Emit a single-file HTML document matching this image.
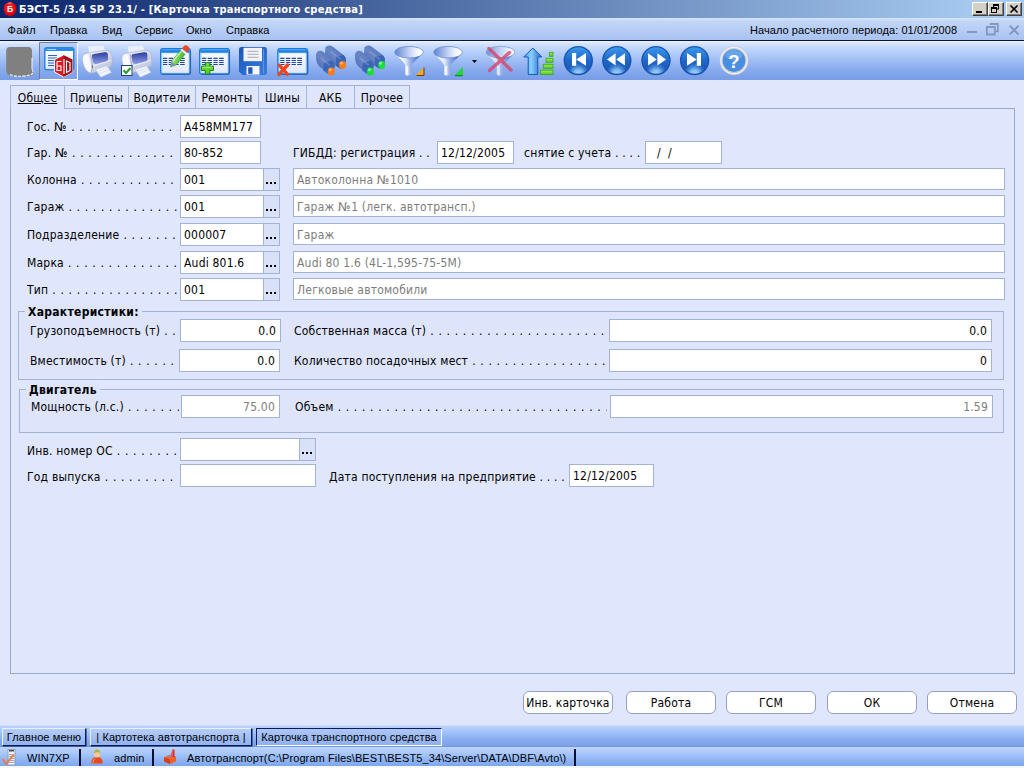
<!DOCTYPE html>
<html lang="ru">
<head>
<meta charset="utf-8">
<title>БЭСТ-5 - Карточка транспортного средства</title>
<style>
*{box-sizing:border-box;margin:0;padding:0}
html,body{width:1024px;height:768px;overflow:hidden;background:#e0e7fc}
body{position:relative;font-family:"DejaVu Sans Condensed","DejaVu Sans","Liberation Sans",sans-serif;font-size:12px;color:#000;letter-spacing:.2px}
.abs,.abs>*{position:absolute}
#title{position:absolute;left:0;top:0;width:1024px;height:18px;background:linear-gradient(90deg,#0a246a 0%,#0c266c 1%,#a6caf0 96%,#a6caf0 100%)}
#title .cap{position:absolute;left:19px;top:3px;font-weight:bold;font-size:11px;color:#fff;letter-spacing:.22px;white-space:nowrap;line-height:14px}
.wb svg{position:absolute;left:0;top:0}
.wb{position:absolute;top:2px;width:16px;height:14px;background:#d4d0c8;border:1px solid;border-color:#fff #404040 #404040 #fff;box-shadow:inset -1px -1px 0 #808080}
#menu{position:absolute;left:0;top:18px;width:1024px;height:22px;background:linear-gradient(180deg,#d6e6fb 0,#c3d6f7 3px,#a9c3f2 21px)}
#menu span{position:absolute;top:5px;font-size:11px;line-height:14px;font-family:"Liberation Sans",sans-serif;letter-spacing:.05px;white-space:nowrap}
#mline{position:absolute;left:0;top:40px;width:1024px;height:1px;background:#0a1438}
#tool{position:absolute;left:0;top:41px;width:1024px;height:39px;background:linear-gradient(180deg,#f0f5ff 0,#d6e4fd 2.5px,#bfd5fb 8px,#a6c3f7 17px,#8fb0f0 26px,#7fa3ea 34px,#779de6 39px)}

#pane{position:absolute;left:10px;top:108px;width:1005px;height:566px;border:1px solid #9ba8ca;background:#e0e7fc}
#tabs{position:absolute;left:10px;top:85px;height:24px}
.tab{position:absolute;top:0;height:24px;border:1px solid #a3b3d6;border-left:none;background:#dfe6fb;line-height:25px;white-space:nowrap;text-align:center}
.tab.first{border-left:1px solid #a3b3d6;border-bottom:none;background:#e0e7fc}
.tab.first span{text-decoration:underline}
.lbl{position:absolute;white-space:nowrap;overflow:hidden;line-height:16px;height:16px}
.inp{position:absolute;height:23px;border:1px solid #a3b3d6;background:#fff;line-height:23px;padding:0 3px;white-space:nowrap;overflow:hidden}
.inp.r{text-align:right;padding-right:4px}
.inp.g{color:#7d7d7d}
.inp.d{height:22px}
.dd{position:absolute;width:17px;height:23px;border:1px solid #a3b3d6;background:#d9e1f8}
.dd i{position:absolute;top:13px;width:2px;height:2px;background:#000}
.grp{position:absolute;border:1px solid #a3b3d6;background:#dee5fb}
.grp b{position:absolute;left:6px;top:-7px;padding:0 3px;background:#dee5fb;line-height:15px;height:15px;font-weight:bold;white-space:nowrap;letter-spacing:.3px}
.btn{position:absolute;top:691px;height:23px;width:90px;border:1px solid #93a0c2;border-radius:6px;background:#fff;text-align:center;line-height:23px;white-space:nowrap}

#wtabs{position:absolute;left:0;top:725px;width:1024px;height:22px;background:linear-gradient(180deg,#d4dffb 0,#bed2fc 1.5px,#aac8fc 5px,#96baf6 10px,#87abed 15px,#7fa3e7 20px,#7498dc 21.5px)}
.wt{position:absolute;top:3px;height:18px;font-family:"Liberation Sans",sans-serif;font-size:11px;letter-spacing:.1px;line-height:17px;white-space:nowrap;text-align:center;border:1px solid;border-color:#e6f0ff #0a1a5a #0a1a5a #e6f0ff;box-shadow:.5px .5px 0 #0a1a5a;background:linear-gradient(180deg,#b6cdf8,#92b2ee)}
.wt.on{border-color:#0a1a5a #fff #fff #0a1a5a;box-shadow:none;background:linear-gradient(180deg,#adc6f6,#8fb0ee)}
#status{position:absolute;left:0;top:747px;width:1024px;height:21px;background:linear-gradient(180deg,#b9d5fc 0,#b0c9fa 5px,#9ac1fa 9px,#93b2f1 13px,#82adf2 17px,#7ea5eb 19px);border-bottom:2px solid #f6f9ff;font-family:"Liberation Sans",sans-serif;font-size:11px;letter-spacing:.1px}
#status span{position:absolute;top:4px;line-height:15px;white-space:nowrap}
#status i{position:absolute;top:2px;width:1.5px;height:17px;background:#0a1030}
.lbl u{text-decoration:none;letter-spacing:.63px}
s{text-decoration:none;font-family:"DejaVu Sans",sans-serif;letter-spacing:.6px}
</style>
</head>
<body>
<div id="title"><svg width="16" height="16" viewBox="0 0 16 16" style="position:absolute;left:2px;top:1.200px"><defs><radialGradient id="gHex" cx=".45" cy=".4" r=".6"><stop offset="0" stop-color="#ff3030"/><stop offset=".7" stop-color="#e00818"/><stop offset="1" stop-color="#b00010"/></radialGradient></defs><path d="M8 .8l5.600 2.800L14.500 9l-2.200 4.800-4.300 1.600-4.300-1.600L1.500 9l.9-5.400z" fill="url(#gHex)"/><path d="M4.500 2.500l3.500-1.600 3 1.400-3 .9z" fill="#ff9a9a" opacity=".6"/><text x="8.100" y="10.800" text-anchor="middle" font-family="Liberation Sans, sans-serif" font-weight="bold" font-size="8.500" fill="#fff4e0">Б</text></svg><div class="cap">БЭСТ-5 /3.4 SP 23.1/ - [Карточка транспортного средства]</div>
<div class="wb" style="left:972px"><svg width="14" height="12" viewBox="0 0 14 12"><path d="M3 8h6v2H3z" fill="#000"/></svg></div>
<div class="wb" style="left:988px"><svg width="14" height="12" viewBox="0 0 14 12"><rect x="4.500" y="1.500" width="5" height="4.500" fill="none" stroke="#000"/><rect x="4" y="1" width="6" height="2" fill="#000"/><rect x="2.500" y="4.500" width="5" height="5" fill="#d4d0c8" stroke="#000"/><rect x="2" y="4" width="6" height="2" fill="#000"/></svg></div>
<div class="wb" style="left:1006px"><svg width="14" height="12" viewBox="0 0 14 12"><path d="M3.500 2.500l7 7M10.500 2.500l-7 7" stroke="#000" stroke-width="1.700"/></svg></div>
</div>
<div id="menu">
<span style="left:7.500px;letter-spacing:.35px">Файл</span><span style="left:50px">Правка</span><span style="left:102px">Вид</span><span style="left:135px">Сервис</span><span style="left:186px">Окно</span><span style="left:226px">Справка</span>
<svg width="60" height="22" viewBox="964 18 60 22" style="position:absolute;left:964px;top:0"><g stroke="#8598bd" fill="none"><path d="M967 32h10" stroke-width="2"/><path d="M989.800 24h8v7.300h-2.500M986.800 27h8v7.500h-8z" stroke-width="1.800"/><path d="M1009.700 25.800l8.800 8.700M1018.500 25.800l-8.800 8.700" stroke-width="2"/></g></svg><span style="left:750px;letter-spacing:.07px">Начало расчетного периода: 01/01/2008</span>
</div>
<div id="mline"></div>
<div id="tool"></div>
<svg id="tbsvg" width="1024" height="40" viewBox="0 41 1024 40" style="position:absolute;left:0;top:41px">
<defs>
<linearGradient id="gWin" x1="0" y1="0" x2="0" y2="1"><stop offset="0" stop-color="#ffffff"/><stop offset="1" stop-color="#dfe6fb"/></linearGradient>
<linearGradient id="gBall" x1="0" y1="0" x2="0" y2="1"><stop offset="0" stop-color="#3a98ec"/><stop offset=".5" stop-color="#1f66c8"/><stop offset="1" stop-color="#1a54b4"/></linearGradient>
<radialGradient id="gGlow" cx=".5" cy="1.020" r=".42"><stop offset="0" stop-color="#b4e2ff"/><stop offset=".45" stop-color="#8cc8fa" stop-opacity=".8"/><stop offset="1" stop-color="#5aa8f0" stop-opacity="0"/></radialGradient>
<linearGradient id="gFun" x1="0" y1="0" x2="1" y2="0"><stop offset="0" stop-color="#5f84d6"/><stop offset=".5" stop-color="#c4d3f4"/><stop offset=".85" stop-color="#ffffff"/></linearGradient>
<linearGradient id="gCone" gradientUnits="userSpaceOnUse" x1="4" y1="0" x2="23" y2="0"><stop offset="0" stop-color="#ffffff"/><stop offset=".35" stop-color="#e6edfc"/><stop offset=".6" stop-color="#9fb6ea"/><stop offset="1" stop-color="#4f78cc"/></linearGradient>
<linearGradient id="gArrow" x1="0" y1="0" x2="1" y2="0"><stop offset="0" stop-color="#3c98ea"/><stop offset=".4" stop-color="#8ad0fc"/><stop offset="1" stop-color="#1c68cc"/></linearGradient>
<linearGradient id="gBar" x1="0" y1="0" x2="0" y2="1"><stop offset="0" stop-color="#a6f050"/><stop offset="1" stop-color="#4cc818"/></linearGradient>
<linearGradient id="gPrTop" x1="0" y1="0" x2="0" y2="1"><stop offset="0" stop-color="#2c3a9c"/><stop offset="1" stop-color="#8f9fe6"/></linearGradient>
<linearGradient id="gPrBody" x1="0" y1="0" x2="1" y2="1"><stop offset="0" stop-color="#f6f7fb"/><stop offset="1" stop-color="#b4bcd6"/></linearGradient>
<linearGradient id="gBino" x1="0" y1="1" x2="1" y2="0"><stop offset="0" stop-color="#4565ac"/><stop offset=".5" stop-color="#6986c6"/><stop offset="1" stop-color="#4a6aae"/></linearGradient>
<linearGradient id="gFlop" x1="0" y1="0" x2="1" y2="1"><stop offset="0" stop-color="#1a56b8"/><stop offset="1" stop-color="#3a7ee0"/></linearGradient>
<linearGradient id="gPen" x1="0" y1="0" x2="1" y2="1"><stop offset="0" stop-color="#b8f090"/><stop offset="1" stop-color="#38b828"/></linearGradient>
<g id="win"><rect x=".75" y=".75" width="29.500" height="25.300" rx="2.200" fill="url(#gWin)" stroke="#1f78d6" stroke-width="1.500"/><rect x="2" y="5" width="27" height="20" fill="none" stroke="#9adcff" stroke-width="1" opacity=".8"/><path d="M1.200 3a2 2 0 0 1 2-2h24.600a2 2 0 0 1 2 2v1.700h-28.600z" fill="#1f7fe0"/><path d="M2.500 1.800h26" stroke="#58b4fa" stroke-width="1"/><path d="M30.300 4v20.500a1.800 1.800 0 0 1-1.800 1.800H2" stroke="#2a62b4" stroke-width="1.600" fill="none" opacity=".8"/></g>
<g id="rows" stroke="#24489c" stroke-width="1.100"><path d="M0 0h4.300M5.700 0h4.300M11.400 0h4.300M17.100 0h4.600M0 2.050h4.300M5.700 2.050h4.300M11.400 2.050h4.300M17.100 2.050h4.600M0 4.100h4.300M5.700 4.100h4.300M11.400 4.100h4.300M17.100 4.100h4.600M0 6.150h4.300M5.700 6.150h4.300M11.400 6.150h4.300M17.100 6.150h4.600"/></g>
<g id="printer">
<path d="M87.500 46l16.500-1 1.500 7.500-16 2z" fill="#eef2fc" stroke="#c9d2ea" stroke-width=".6" opacity=".9"/>
<path d="M82.300 59.500c-.3-3.500.7-5.600 3.700-6.200l18.500-3c4.500-.6 7.200 1.700 7.500 5.200l.3 6.500c.1 2.500-.8 4.200-3.300 5l-13.500 5.300c-3.500 1.300-6.700.8-8.700-1.300-2.300-2.300-4-6.500-4.500-11.500z" fill="url(#gPrBody)" stroke="#a9b2d0" stroke-width=".7"/>
<path d="M83 59c1-3 2.500-4.600 5-5l3.500 13-1 5.500c-4-1-6.800-6-7.500-13.500z" fill="#fbfcff" opacity=".9"/>
<path d="M90.700 54l1.800 12.500-1.200 6" stroke="#8e98bc" stroke-width=".9" fill="none" opacity=".75"/>
<path d="M92 57c-.3-1.700.4-2.700 2-3l10.500-1.700c2-.3 3.200.6 3.300 2.300l.2 4c.1 1.500-.6 2.400-2 2.800l-9 2.500c-2 .5-3.500-.2-4-2z" fill="url(#gPrTop)"/>
<path d="M91 66.500l20.500-6.200" stroke="#f4f6fd" stroke-width="1" opacity=".8" fill="none"/>
<path d="M95.500 69.500l11.500-3.700 4.300 6.700-10.500 4.700z" fill="#f2f5fd" stroke="#bcc6e2" stroke-width=".6"/>
<path d="M97.500 71.500l10.500-3.600M99 73.800l10.500-4" stroke="#d0d8ee" stroke-width=".7"/>
<ellipse cx="92.300" cy="66.500" rx=".7" ry="1.600" fill="#3c4468" opacity=".7"/>
</g>
<g id="bino">
<path d="M10 2.500c1.200-2.200 4.500-2.800 7-1l11 8.500c2.300 1.800 3 4 2.300 6.500l-1.300 4.500c-1 2.300-3.500 3-5.800 1.800l-9.700-6.800c-2.500-1.800-3.800-4.300-4-7.500z" fill="url(#gBino)"/>
<path d="M.6 9c.8-3 4-4.200 6.500-2.400l10.400 8c2.300 1.800 3 4.200 2.200 6.600l-1.400 5c-1 2.300-3.600 3-5.800 1.700l-7.500-5.500c-2.700-2-4.200-5-4.400-8.600z" fill="url(#gBino)"/>
<path d="M20.500 11.500l7.500-1.500c2 1.800 2.800 3.800 2.300 6.500l-1.300 4.500c-1 2.300-3.500 3-5.800 1.800l-3-2.200z" fill="#2f5cb4" opacity=".75"/>
<path d="M8.500 18l8-2.500c2.200 1.800 2.900 4 2.300 6.300l-1.400 5c-1 2.300-3.600 3-5.800 1.700l-4-3z" fill="#2f5cb4" opacity=".75"/>
<path d="M5 13l9 7M15 6.500l10 7.500" stroke="#9fb4e4" stroke-width="1.300" opacity=".45" fill="none"/>
</g>
<g id="funnel">
<path d="M.5 6.500C3 11 9 15 10.800 19.500v9c0 1.500 6.500 1.500 6.500 0v-9C19 15 26 11 28.700 6.500z" fill="url(#gCone)"/>
<path d="M11.200 20v8.500c0 1 2.300 1.200 2.600 0V20z" fill="#fff" opacity=".8"/>
<ellipse cx="14.600" cy="6.200" rx="14.300" ry="5.800" fill="url(#gFun)" stroke="#6a8ad0" stroke-width=".8"/>
</g>
<g id="ball">
<circle cx="0" cy="0" r="14.700" fill="#1a55b4"/>
<circle cx="0" cy="-.2" r="13.200" fill="url(#gBall)"/>
<circle cx="0" cy="-.2" r="13.200" fill="url(#gGlow)"/>
</g>
</defs>

<!-- 1: disabled blob -->
<path d="M10 47h18a4 4 0 0 1 4 4v18.500c0 2.500 1.500 3 1.500 4.500 0 2-6 2.500-12 2.500S7.500 76 7 73.500c-.8-1.500-.8-3-.8-5V51a4 4 0 0 1 3.800-4z" fill="#808080"/>
<path d="M10 74.600c3 1.600 8 2 13 1.500 5-.4 9-1 10.200-3.600" stroke="#fff" stroke-width="1.100" fill="none" stroke-dasharray="3 1.200" opacity=".95"/><path d="M32 58v10.500c0 1.500.8 2.500 1.300 3.500" stroke="#fff" stroke-width="1" fill="none" opacity=".9"/>

<!-- 2: pressed button -->
<rect x="39.500" y="42.500" width="38" height="37" fill="#86a8ec" opacity=".35"/>
<path d="M39.500 79.500v-37h38" stroke="#6f7f9c" stroke-width="1" fill="none"/>
<path d="M77.500 43v36.500h-38" stroke="#ffffff" stroke-width="1" fill="none"/>
<g transform="translate(44,47)">
<rect x=".75" y=".75" width="29" height="22" rx="2" fill="url(#gWin)" stroke="#2b86dc" stroke-width="1.500"/>
<path d="M1 3a2 2 0 0 1 2-2h24.500a2 2 0 0 1 2 2v1h-28.500z" fill="#2a8be6"/><path d="M3 2.500h9" stroke="#9fd4ff" stroke-width="1"/>
<path d="M4 8.500h9M4 11h9M4 13.500h9M4 16h9M4 18.500h9" stroke="#2a64c0" stroke-width="1.200"/>
</g>
<g transform="translate(54,55)">
<path d="M9.500 0l9 4.500v12.500l-9 5-9-5V4.500z" fill="#d81820" stroke="#fff" stroke-width="1"/>
<path d="M9.500 0l9 4.500v12.500l-9 5z" fill="#a01018"/>
<path d="M3 6.500h4.500M3 6.500v9h4v-4.500h-4M10 4v15M12.500 6l3.500 1.500v8l-3.500 2z" stroke="#fff" stroke-width="1.100" fill="none"/>
</g>

<!-- 3,4: printers -->
<use href="#printer"/>
<use href="#printer" x="39.500"/>
<rect x="121.500" y="65.500" width="10.500" height="10" fill="#fff" stroke="#1c4870" stroke-width="1"/>
<path d="M123.500 70.200l2.600 2.800 4.400-5" stroke="#2c9a2c" stroke-width="2" fill="none"/>

<!-- 5: window + pencil -->
<use href="#win" x="160" y="48"/>
<use href="#rows" x="163" y="58.400"/>
<g transform="translate(170.500,67) rotate(-50)">
<path d="M0 0l5-3h14.500v6h-14.500z" fill="url(#gPen)" stroke="#2c9a20" stroke-width=".5"/>
<path d="M0 0l5-3v6z" fill="#8a93a8"/>
<path d="M6 -1.800h13" stroke="#d4f8b4" stroke-width="1.200" opacity=".8"/>
<path d="M19.300-3.100h2.400v6.200h-2.400z" fill="#f4f0ec"/>
<path d="M21.500-3.200h2.500a3.200 3.200 0 0 1 0 6.400h-2.500z" fill="#e84a28"/>
</g>

<!-- 6: window + plus -->
<use href="#win" x="199" y="48"/>
<use href="#rows" x="202" y="58.400"/>
<path d="M205.300 62.800h4.500v3.400h3.700v4.300h-3.700v3.500h-4.500v-3.500h-3.900v-4.300h3.900z" fill="#5cd42c" stroke="#1f8410" stroke-width="1" stroke-linejoin="round"/>
<path d="M206.300 64h2.500M202.500 67.300h10" stroke="#b8f490" stroke-width="1" fill="none" opacity=".8"/>

<!-- 7: floppy -->
<path d="M241.500 47h23a2.500 2.500 0 0 1 2.500 2.500v23a2.500 2.500 0 0 1-2.500 2.500h-22l-3.500-3.500v-22a2.500 2.500 0 0 1 2.500-2.500z" fill="url(#gFlop)"/>
<rect x="243.500" y="47.800" width="18.500" height="13.400" fill="#f2f3f8"/>
<path d="M247.500 51.300h11M247.500 54.300h11M247.500 57.300h11" stroke="#b9b9c4" stroke-width="1.300"/>
<rect x="246.500" y="66" width="13" height="8.600" fill="#f4f6fc"/>
<rect x="248.200" y="67.300" width="4.300" height="6.500" fill="#2458b8"/>
<path d="M263.500 49v24" stroke="#6aa4f0" stroke-width="1" opacity=".7"/>

<!-- 8: window + red X -->
<use href="#win" x="277.200" y="48"/>
<use href="#rows" x="280.200" y="58.400"/>
<path d="M279.300 65.200l8 9M287.600 65l-8.600 9.400" stroke="#f0441c" stroke-width="3.400" stroke-linecap="round"/>

<!-- 9,10: binoculars -->
<use href="#bino" x="315.500" y="45"/>
<ellipse cx="331.200" cy="71.400" rx="3.500" ry="4" fill="#ff7a10"/><circle cx="330.300" cy="69.800" r="1.500" fill="#ffc090" opacity=".8"/>
<ellipse cx="342.500" cy="65" rx="3.500" ry="4.100" fill="#ff7a10"/><circle cx="341.400" cy="63.200" r="1.500" fill="#ffc090" opacity=".8"/>
<use href="#bino" x="354.500" y="45"/>
<ellipse cx="370.400" cy="71.400" rx="3.500" ry="4" fill="#18e038"/><circle cx="369.500" cy="69.800" r="1.500" fill="#a0ffb0" opacity=".8"/>
<ellipse cx="381.700" cy="65" rx="3.500" ry="4.100" fill="#18e038"/><circle cx="380.500" cy="63.200" r="1.500" fill="#a0ffb0" opacity=".8"/>

<!-- 11,12: funnels -->
<use href="#funnel" x="394.500" y="46"/>
<path d="M416.500 75.500v-1l7-7v8z" fill="#f8a818"/><path d="M416.500 75.500h7.500v-8" stroke="#6a3c10" stroke-width="1" fill="none"/>
<use href="#funnel" x="433.500" y="46"/>
<path d="M455 75.500v-.5l8-8v8.500z" fill="#20d830"/><path d="M455 75.700h8" stroke="#0c7a18" stroke-width="1" fill="none"/>
<path d="M472 60h5l-2.500 3z" fill="#000"/>

<!-- 13: funnel crossed -->
<use href="#funnel" x="486" y="46" opacity=".8"/>
<path d="M489 48.500l22 21.500M509.500 52.500l-20 18" stroke="#dc4468" stroke-width="3.400" stroke-linecap="round" opacity=".8"/>

<!-- 14: sort -->
<path d="M532.800 48l9 9h-4v17.500h-9.600V57h-4.400z" fill="url(#gArrow)" stroke="#1858b8" stroke-width="1"/>
<rect x="549.300" y="52.300" width="3.700" height="4" fill="url(#gBar)" stroke="#38a818" stroke-width=".8"/>
<rect x="546" y="58.300" width="7" height="4" fill="url(#gBar)" stroke="#38a818" stroke-width=".8"/>
<rect x="543.300" y="64.300" width="9.700" height="4" fill="url(#gBar)" stroke="#38a818" stroke-width=".8"/>
<rect x="540.500" y="70.200" width="12.500" height="4.300" fill="url(#gBar)" stroke="#38a818" stroke-width=".8"/>

<!-- 15-18: nav balls -->
<use href="#ball" x="578.300" y="60.600"/>
<path d="M572 53h4.200v12.800h-4.200zM576.300 59.400l9.700-6.400v12.800z" fill="#fff"/>
<use href="#ball" x="616.800" y="60.600"/>
<path d="M607 59.400l8.600-6.200v12.400zM616.300 59.400l8.600-6.200v12.400z" fill="#fff"/>
<use href="#ball" x="656" y="60.600"/>
<path d="M666 59.400l-8.600-6.200v12.400zM656.700 59.400l-8.600-6.200v12.400z" fill="#fff"/>
<use href="#ball" x="694.600" y="60.600"/>
<path d="M701 53h-4.200v12.800h4.200zM696.700 59.400l-9.700-6.400v12.800z" fill="#fff"/>

<!-- 19: help -->
<circle cx="734" cy="60.600" r="14.300" fill="#c9ccd2"/>
<circle cx="734" cy="60.600" r="13.200" fill="none" stroke="#eef0f4" stroke-width="1.200"/>
<circle cx="734" cy="60.600" r="11.300" fill="#4a8ee0"/>
<ellipse cx="734" cy="55" rx="8.500" ry="5" fill="#7fb8f4" opacity=".5"/>
<text x="734" y="67.500" text-anchor="middle" font-family="Liberation Sans, sans-serif" font-weight="bold" font-size="19" fill="#fff">?</text>
</svg>
<div id="pane"></div>
<div id="tabs"><div class="tab first" style="left:0px;width:55px"><span>Общее</span></div><div class="tab " style="left:55px;width:64px"><span>Прицепы</span></div><div class="tab " style="left:119px;width:67px"><span>Водители</span></div><div class="tab " style="left:186px;width:63px"><span>Ремонты</span></div><div class="tab " style="left:249px;width:48px"><span>Шины</span></div><div class="tab " style="left:297px;width:48px"><span>АКБ</span></div><div class="tab " style="left:345px;width:55px"><span>Прочее</span></div></div>
<div class="lbl" style="left:27px;top:119px;width:151px">Гос. <s>№</s><u> . . . . . . . . . . . . . . . . . . . . . . . . . . . . . . . . . . . . . . . .</u></div>
<div class="inp" style="left:180px;top:115px;width:81px">A458MM177</div>
<div class="lbl" style="left:27px;top:145px;width:151px">Гар. <s>№</s><u> . . . . . . . . . . . . . . . . . . . . . . . . . . . . . . . . . . . . . . . .</u></div>
<div class="inp" style="left:180px;top:141px;width:81px">80-852</div>
<div class="lbl" style="left:27px;top:172px;width:151px">Колонна<u> . . . . . . . . . . . . . . . . . . . . . . . . . . . . . . . . . . . . . . . .</u></div>
<div class="inp" style="left:180px;top:168px;width:84px">001</div>
<div class="dd" style="left:263px;top:168px"><i style="left:2px"></i><i style="left:6px"></i><i style="left:10px"></i></div>
<div class="inp g d" style="left:293px;top:168px;width:712px">Автоколонна <s>№</s>1010</div>
<div class="lbl" style="left:27px;top:199px;width:151px">Гараж<u> . . . . . . . . . . . . . . . . . . . . . . . . . . . . . . . . . . . . . . . .</u></div>
<div class="inp" style="left:180px;top:195px;width:84px">001</div>
<div class="dd" style="left:263px;top:195px"><i style="left:2px"></i><i style="left:6px"></i><i style="left:10px"></i></div>
<div class="inp g d" style="left:293px;top:195px;width:712px">Гараж <s>№</s>1 (легк. автотрансп.)</div>
<div class="lbl" style="left:27px;top:227px;width:151px">Подразделение<u> . . . . . . . . . . . . . . . . . . . . . . . . . . . . . . . . . . . . . . . .</u></div>
<div class="inp" style="left:180px;top:223px;width:84px">000007</div>
<div class="dd" style="left:263px;top:223px"><i style="left:2px"></i><i style="left:6px"></i><i style="left:10px"></i></div>
<div class="inp g d" style="left:293px;top:223px;width:712px">Гараж</div>
<div class="lbl" style="left:27px;top:255px;width:151px">Марка<u> . . . . . . . . . . . . . . . . . . . . . . . . . . . . . . . . . . . . . . . .</u></div>
<div class="inp" style="left:180px;top:251px;width:84px">Audi 801.6</div>
<div class="dd" style="left:263px;top:251px"><i style="left:2px"></i><i style="left:6px"></i><i style="left:10px"></i></div>
<div class="inp g d" style="left:293px;top:251px;width:712px">Audi 80 1.6 (4L-1,595-75-5M)</div>
<div class="lbl" style="left:27px;top:282px;width:151px">Тип<u> . . . . . . . . . . . . . . . . . . . . . . . . . . . . . . . . . . . . . . . .</u></div>
<div class="inp" style="left:180px;top:278px;width:84px">001</div>
<div class="dd" style="left:263px;top:278px"><i style="left:2px"></i><i style="left:6px"></i><i style="left:10px"></i></div>
<div class="inp g d" style="left:293px;top:278px;width:712px">Легковые автомобили</div>
<div class="lbl" style="left:293px;top:145px;width:140px">ГИБДД: регистрация . .</div>
<div class="inp" style="left:437px;top:141px;width:77px">12/12/2005</div>
<div class="lbl" style="left:524px;top:145px;width:120px">снятие с учета . . . .</div>
<div class="inp" style="left:645px;top:141px;width:77px;padding-left:11px">/&nbsp;&nbsp;/</div>
<div class="grp" style="left:18px;top:311px;width:986px;height:69px"><b>Характеристики:</b></div>
<div class="lbl" style="left:30px;top:323px;width:148px">Грузоподъемность (т)<u> . . . . . . . . . . . . . . . . . . . . . . . . . . . . . . . . . . . . . . . .</u></div>
<div class="inp r" style="left:180px;top:319px;width:101px">0.0</div>
<div class="lbl" style="left:294px;top:323px;width:312px">Собственная масса (т)<u> . . . . . . . . . . . . . . . . . . . . . . . . . . . . . . . . . . . . . . . .</u></div>
<div class="inp r" style="left:609px;top:319px;width:383px">0.0</div>
<div class="lbl" style="left:30px;top:353px;width:148px">Вместимость (т)<u> . . . . . . . . . . . . . . . . . . . . . . . . . . . . . . . . . . . . . . . .</u></div>
<div class="inp r" style="left:179px;top:349px;width:101px">0.0</div>
<div class="lbl" style="left:294px;top:353px;width:312px">Количество посадочных мест<u> . . . . . . . . . . . . . . . . . . . . . . . . . . . . . . . . . . . . . . . .</u></div>
<div class="inp r" style="left:609px;top:349px;width:383px">0</div>
<div class="grp" style="left:19px;top:389px;width:985px;height:44px"><b>Двигатель</b></div>
<div class="lbl" style="left:31px;top:399px;width:148px">Мощность (л.с.)<u> . . . . . . . . . . . . . . . . . . . . . . . . . . . . . . . . . . . . . . . .</u></div>
<div class="inp r g" style="left:181px;top:395px;width:99px">75.00</div>
<div class="lbl" style="left:295px;top:399px;width:312px">Объем<u> . . . . . . . . . . . . . . . . . . . . . . . . . . . . . . . . . . . . . . . .</u></div>
<div class="inp r g" style="left:610px;top:395px;width:383px">1.59</div>
<div class="lbl" style="left:27px;top:443px;width:151px">Инв. номер ОС<u> . . . . . . . . . . . . . . . . . . . . . . . . . . . . . . . . . . . . . . . .</u></div>
<div class="inp" style="left:180px;top:438px;width:120px"></div>
<div class="dd" style="left:299px;top:438px"><i style="left:2px"></i><i style="left:6px"></i><i style="left:10px"></i></div>
<div class="lbl" style="left:27px;top:469px;width:151px">Год выпуска<u> . . . . . . . . . . . . . . . . . . . . . . . . . . . . . . . . . . . . . . . .</u></div>
<div class="inp" style="left:180px;top:464px;width:136px"></div>
<div class="lbl" style="left:329px;top:469px;width:238px">Дата поступления на предприятие . . . .</div>
<div class="inp" style="left:569px;top:464px;width:85px">12/12/2005</div>
<div class="btn" style="left:523px;width:90px">Инв. карточка</div>
<div class="btn" style="left:626px;width:90px">Работа</div>
<div class="btn" style="left:726px;width:90px">ГСМ</div>
<div class="btn" style="left:827px;width:90px">ОК</div>
<div class="btn" style="left:927px;width:90px">Отмена</div>

<div id="wtabs">
<div class="wt" style="left:2px;width:84px">Главное меню</div>
<div class="wt" style="left:90px;width:162px">| Картотека автотранспорта |</div>
<div class="wt on" style="left:256px;width:186px">Карточка транспортного средства</div>
</div>
<div id="status">
<svg width="200" height="21" viewBox="0 747 200 21" style="position:absolute;left:0;top:0">
<rect x="8" y="749.500" width="7" height="15.500" fill="#eef1f6" stroke="#8c96aa" stroke-width=".8"/>
<path d="M9 750.800h5" stroke="#20242c" stroke-width="1.200"/>
<path d="M8.500 754.500h6M8.500 756.500h6M8.500 758.500h6M8.500 760.500h6M8.500 762.500h6" stroke="#9098a8" stroke-width=".8"/>
<path d="M3 759.500l3.200 4.300 7-8.500" stroke="#f07a3a" stroke-width="2" fill="none" stroke-linecap="round" opacity=".9"/>
<path d="M91.500 763.500c-.5-4 1.500-6.500 5.500-6.500s6 2.500 5.500 6.500z" fill="#e84a1c"/>
<path d="M93 763c0-2.500 1-4 2.500-4.500" stroke="#ff9a5a" stroke-width="1" fill="none"/>
<circle cx="97" cy="754.300" r="3.200" fill="#f6c89c"/>
<path d="M93.800 753.800c.2-2.800 1.500-4.300 3.400-4.300 2 0 3.200 1.500 3.200 4-1.500-1.500-4-2-6.600.3z" fill="#a8b83c"/>
<path d="M164 757.500l5-2.500 7 1.500v5l-6 2.500-6-2.500z" fill="#f0602a"/>
<path d="M164 757.500l6 2v4.500l-6-2.500z" fill="#d8401c"/>
<path d="M166 756.500l4-1.500 4 1-4 1.800z" fill="#8c8ca0" opacity=".8"/>
<path d="M173.500 749.500v7.500" stroke="#e02828" stroke-width="2"/>
<path d="M171 756l2.500-6.500" stroke="#e85040" stroke-width="1.200"/>
</svg>
<span style="left:27px">WIN7XP</span><i style="left:79px"></i>
<span style="left:114px">admin</span><i style="left:152px"></i>
<span style="left:187px">Автотранспорт(C:\Program Files\BEST\BEST5_34\Server\DATA\DBF\Avto\)</span><i style="left:574px"></i>
</div>
</body>
</html>
